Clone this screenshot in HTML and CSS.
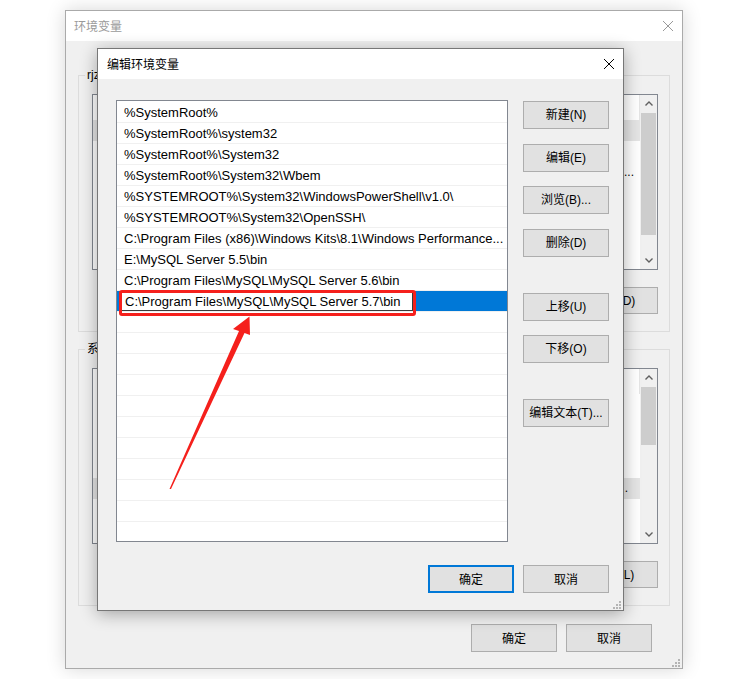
FILE: index.html
```html
<!DOCTYPE html>
<html lang="zh-CN">
<head>
    <meta charset="utf-8">
    <title>编辑环境变量</title>
    <link rel="stylesheet" href="styles.css">
</head>
<body>
<div class="desk">

    <!-- Ytre vindu: 环境变量 (inaktivt, bak dialogen) -->
    <div class="win outer">
        <div class="titlebar">
            <span class="title">环境变量</span>
            <svg class="close" width="10" height="10" viewBox="0 0 10 10"><path d="M0 0L10 10M10 0L0 10"/></svg>
        </div>
        <div class="outer-body">
            <fieldset class="group">
                <legend>rjz</legend>
                <div class="vlist">
                    <div class="vrows">
                        <div class="vhead"></div>
                        <div class="vrow sel"></div>
                        <div class="vrow"></div>
                        <div class="vrow"><span class="more">...</span></div>
                    </div>
                    <div class="sbar">
                        <div class="sarrow"><svg width="8" height="5" viewBox="0 0 8 5"><path d="M0.5 4.5L4 1L7.5 4.5"/></svg></div>
                        <div class="strack"><div class="thumb thumb-user"></div></div>
                        <div class="sarrow"><svg width="8" height="5" viewBox="0 0 8 5"><path d="M0.5 0.5L4 4L7.5 0.5"/></svg></div>
                    </div>
                </div>
                <div class="btnrow">
                    <button class="btn">新建(N)...</button>
                    <button class="btn">编辑(E)...</button>
                    <button class="btn">删除(D)</button>
                </div>
            </fieldset>

            <fieldset class="group">
                <legend>系统变量(S)</legend>
                <div class="vlist">
                    <div class="vrows">
                        <div class="vhead"></div>
                        <div class="vrow"></div>
                        <div class="vrow"></div>
                        <div class="vrow"></div>
                        <div class="vrow"></div>
                        <div class="vrow sel"><span class="more short">...</span></div>
                    </div>
                    <div class="sbar">
                        <div class="sarrow"><svg width="8" height="5" viewBox="0 0 8 5"><path d="M0.5 4.5L4 1L7.5 4.5"/></svg></div>
                        <div class="strack"><div class="thumb thumb-sys"></div></div>
                        <div class="sarrow"><svg width="8" height="5" viewBox="0 0 8 5"><path d="M0.5 0.5L4 4L7.5 0.5"/></svg></div>
                    </div>
                </div>
                <div class="btnrow">
                    <button class="btn">新建(W)...</button>
                    <button class="btn">编辑(I)...</button>
                    <button class="btn">删除(L)</button>
                </div>
            </fieldset>

            <div class="outer-foot">
                <button class="btn">确定</button>
                <button class="btn">取消</button>
            </div>
        </div>
        <svg class="grip" width="8" height="8" viewBox="0 0 8 8"><path d="M6 0h2v2h-2zM3 3h2v2h-2zM6 3h2v2h-2zM0 6h2v2h-2zM3 6h2v2h-2zM6 6h2v2h-2z"/></svg>
    </div>

    <!-- Dialogen: 编辑环境变量 -->
    <div class="win dlg">
        <div class="titlebar">
            <span class="title">编辑环境变量</span>
            <svg class="close" width="10" height="10" viewBox="0 0 10 10"><path d="M0 0L10 10M10 0L0 10"/></svg>
        </div>
        <div class="dlg-body">
            <div class="dlg-main">
                <div class="pathlist">
                    <div class="prow">%SystemRoot%</div>
                    <div class="prow">%SystemRoot%\system32</div>
                    <div class="prow">%SystemRoot%\System32</div>
                    <div class="prow">%SystemRoot%\System32\Wbem</div>
                    <div class="prow">%SYSTEMROOT%\System32\WindowsPowerShell\v1.0\</div>
                    <div class="prow">%SYSTEMROOT%\System32\OpenSSH\</div>
                    <div class="prow">C:\Program Files (x86)\Windows Kits\8.1\Windows Performance...</div>
                    <div class="prow">E:\MySQL Server 5.5\bin</div>
                    <div class="prow">C:\Program Files\MySQL\MySQL Server 5.6\bin</div>
                    <div class="prow editing"><span class="edit">C:\Program Files\MySQL\MySQL Server 5.7\bin</span></div>
                    <div class="prow"></div>
                    <div class="prow"></div>
                    <div class="prow"></div>
                    <div class="prow"></div>
                    <div class="prow"></div>
                    <div class="prow"></div>
                    <div class="prow"></div>
                    <div class="prow"></div>
                    <div class="prow"></div>
                    <div class="prow"></div>
                </div>
                <div class="side">
                    <button class="btn">新建(N)</button>
                    <button class="btn nudge">编辑(E)</button>
                    <button class="btn">浏览(B)...</button>
                    <button class="btn nudge">删除(D)</button>
                    <button class="btn spaced">上移(U)</button>
                    <button class="btn">下移(O)</button>
                    <button class="btn spaced">编辑文本(T)...</button>
                </div>
            </div>
            <div class="dlg-foot">
                <button class="btn default">确定</button>
                <button class="btn">取消</button>
            </div>
        </div>
        <svg class="grip" width="8" height="8" viewBox="0 0 8 8"><path d="M6 0h2v2h-2zM3 3h2v2h-2zM6 3h2v2h-2zM0 6h2v2h-2zM3 6h2v2h-2zM6 6h2v2h-2z"/></svg>
    </div>

    <!-- Markering: rød ramme og pil -->
    <div class="mark"></div>
    <svg class="arrow" width="749" height="679" viewBox="0 0 749 679">
        <polygon points="169.5,489 239,331 233,329 249.5,316.5 250,335 244.5,333 171,489"/>
    </svg>

</div>
</body>
</html>
```

FILE: styles.css
```css
/* Grunnoppsett */
*{
    box-sizing: border-box;
}

body{
    margin: 0;
    background: #fff;
    font-family: "Liberation Sans", "Noto Sans CJK SC", sans-serif;
    font-size: 12px;
    color: #000;
}

.desk{ /* hele skjermbildet */
    position: relative;
    width: 749px;
    height: 679px;
    overflow: hidden;
}

/* Vinduer */
.win{
    position: absolute;
    display: flex;
    flex-direction: column;
    background: #f0f0f0;
}

.outer{
    left: 65px;
    top: 10px;
    width: 618px;
    height: 659px;
    border: 1px solid #aaa;
    box-shadow: 0 0 18px rgba(0, 0, 0, 0.16);
}

.dlg{
    left: 97px;
    top: 48px;
    width: 527px;
    height: 563px;
    border: 1px solid #777;
    box-shadow: 0 3px 16px rgba(0, 0, 0, 0.32);
}

.titlebar{
    flex-shrink: 0;
    height: 30px;
    background: #fff;
    display: flex;
    align-items: center;
    justify-content: space-between;
    padding: 0 9px 0 8px;
}

.dlg .titlebar{
    padding-left: 9px;
}

.title{
    margin-top: -2px;
}

.outer .title{
    color: #9a9a9a;
}

.close path{
    stroke: #000;
    stroke-width: 1;
    fill: none;
}

.outer .close path{
    stroke: #999;
}

.grip{
    position: absolute;
    right: 2px;
    bottom: 1px;
}

.grip path{
    fill: #b4b4b4;
}

/* Knapper */
.btn{
    font: inherit;
    color: #000;
    width: 86px;
    height: 28px;
    padding: 0 0 2px;
    background: #e1e1e1;
    border: 1px solid #adadad;
}

.btn.default{
    border: 2px solid #0078d7;
}

/* Ytre vindu, innhold */
.outer-body{
    padding: 26px 12px 0;
    display: flex;
    flex-direction: column;
}

.group{
    margin: 0;
    padding: 11px 11px 17px 13px;
    border: 1px solid #dcdcdc;
}

.group + .group{
    margin-top: 9px;
}

.group legend{
    height: 16px;
    padding: 0 2px;
    margin-left: -7px;
    line-height: 16px;
}

.vlist{
    height: 176px;
    display: flex;
    border: 1px solid #828790;
    background: #fff;
}

.vrows{
    flex: 1;
    display: flex;
    flex-direction: column;
}

.vhead{
    height: 25px;
    border-right: 1px solid #e5e5e5;
}

.vrow{
    height: 21px;
    line-height: 21px;
    text-align: right;
}

.vrow.sel{
    background: #e5e5e5;
}

.more{
    padding-right: 6px;
}

.more.short{
    padding-right: 12px;
}

.sbar{
    width: 17px;
    display: flex;
    flex-direction: column;
    background: #f0f0f0;
}

.sarrow{
    height: 17px;
    display: flex;
    align-items: center;
    justify-content: center;
}

.sarrow path{
    stroke: #606060;
    stroke-width: 1.4;
    fill: none;
}

.strack{
    flex: 1;
    padding: 1px 1px 0;
}

.thumb{
    background: #cdcdcd;
}

.thumb-user{
    height: 122px;
}

.thumb-sys{
    height: 58px;
}

.btnrow{
    margin-top: 17px;
    display: flex;
    justify-content: flex-end;
    gap: 9px;
}

.btnrow .btn{
    height: 27px;
}

.outer-foot{
    margin-top: 18px;
    padding-right: 18px;
    display: flex;
    justify-content: flex-end;
    gap: 9px;
}

/* Dialogen */
.dlg-body{
    flex: 1;
    display: flex;
    flex-direction: column;
    padding: 21px 14px 0 18px;
}

.dlg-main{
    display: flex;
    gap: 15px;
}

.pathlist{
    width: 392px;
    height: 442px;
    padding-top: 1px;
    background: #fff;
    border: 1px solid #828790;
    overflow: hidden;
}

.prow{
    height: 21px;
    line-height: 21px;
    padding-left: 7px;
    border-bottom: 1px solid #f0f0f0;
    font-size: 13px;
    white-space: nowrap;
    overflow: hidden;
}

.prow.editing{
    background: #0078d7;
    padding-left: 4px;
    overflow: visible;
}

.edit{
    display: block;
    width: 292px;
    height: 20px;
    line-height: 19px;
    padding-left: 3px;
    background: #fff;
    border: 1px solid #3c3c3c;
}

.side{
    display: flex;
    flex-direction: column;
    gap: 14px;
    padding-top: 1px;
}

.side .btn{
    padding-bottom: 3px;
}

.side .nudge{
    margin-top: 1px;
}

.side .spaced{
    margin-top: 22px;
}

.dlg-foot{
    margin-top: 23px;
    display: flex;
    justify-content: flex-end;
    gap: 9px;
}

/* Rød markering over listen */
.mark{
    position: absolute;
    left: 119px;
    top: 290px;
    width: 297px;
    height: 26px;
    border: 3px solid #f5201c;
    border-radius: 3px;
}

.arrow{
    position: absolute;
    left: 0;
    top: 0;
    pointer-events: none;
}

.arrow polygon{
    fill: #f5201c;
}
```
